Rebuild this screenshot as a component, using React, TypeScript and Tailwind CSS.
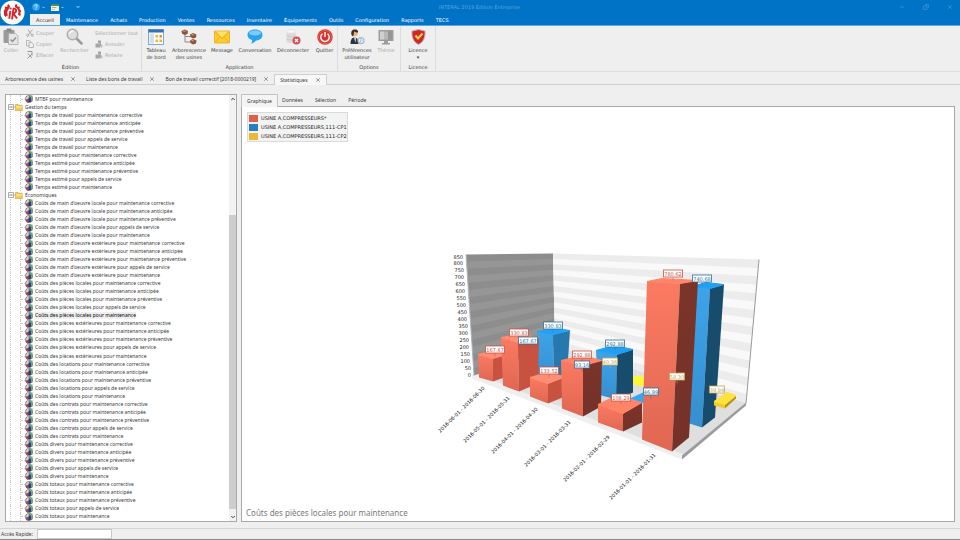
import { useState } from 'react';
import type { ReactNode } from 'react';
import { ChevronDown, ChevronUp, Copy, Minus, X } from 'lucide-react';
import clsx from 'clsx';

const menus = ['Maintenance', 'Achats', 'Production', 'Ventes', 'Ressources', 'Inventaire', 'Équipements', 'Outils', 'Configuration', 'Rapports', 'TECS'];

const documents = ['Arborescence des usines', 'Liste des bons de travail', 'Bon de travail correctif [2018-0000219]', 'Statistiques'];

const kinds = ['maintenance corrective', 'maintenance anticipée', 'maintenance préventive', 'appels de service', 'maintenance'];

const expand = (names: string[]) => names.flatMap((name) => kinds.map((kind) => `${name} pour ${kind}`));

type Row = { label: string; folder?: boolean };

const rows: Row[] = [
  { label: 'MTBF pour maintenance' },
  { label: 'Gestion du temps', folder: true },
  ...expand(['Temps de travail', 'Temps estimé']).map((label) => ({ label })),
  { label: 'Économiques', folder: true },
  ...expand([
    "Coûts de main d'oeuvre locale",
    "Coûts de main d'oeuvre extérieure",
    'Coûts des pièces locales',
    'Coûts des pièces extérieures',
    'Coûts des locations',
    'Coûts des contrats',
    'Coûts divers',
    'Coûts totaux',
  ]).map((label) => ({ label })),
];

/* ---------- icons ---------- */

const Logo = () => (
  <svg viewBox="0 0 24 24" className="absolute left-0 top-0 z-10 size-[25px]">
    <circle cx="12" cy="12" r="11.6" fill="#fff" />
    <g fill="none" stroke="#d8232a">
      <path d="M9.500 6.500A6 6 0 0 0 6.300 15.500" strokeWidth="3.200" />
      <path d="M7.600 4.400l1 2M4.700 7l2 1.100M3.700 10.800h2.200M4.300 14.600l2-.7" strokeWidth="1.800" />
      <path d="M14.500 6A6 6 0 0 1 18.200 14.500" strokeWidth="2" />
      <path d="M15.800 4l-.6 2M18.800 6.800l-1.600 1.100M20.200 10.600h-2M19.800 14.200l-2-.6" strokeWidth="1.700" />
      <path d="M10 10.500L9.100 17.800" stroke="#fff" strokeWidth="3.400" />
      <path d="M9.900 10.500L8.900 18" strokeWidth="1.800" />
      <path d="M13 7.800L11.600 18.600M12.400 8.400c4.200-.8 4 3.600 .2 4.400l3.800 5" strokeWidth="1.800" />
    </g>
    <circle cx="10.200" cy="8.200" r="1.200" fill="#d8232a" stroke="#fff" strokeWidth=".5" />
  </svg>
);

const HelpIcon = () => (
  <svg viewBox="0 0 16 16" className="size-2">
    <circle cx="8" cy="8" r="7.500" fill="#36a6ee" />
    <path d="M5.500 6.200c0-3.400 5.300-3.200 5.100-.3C10.500 7.800 8 7.800 8 9.600M8 11v1.800" fill="none" stroke="#fff" strokeWidth="1.700" />
  </svg>
);

const WindowIcon = () => (
  <svg viewBox="0 0 16 14" className="h-[7px] w-2">
    <path fill="#f4f1e4" d="M0 0h16v14H0z" />
    <path fill="#4d8f58" d="M0 0h16v4H0z" />
    <path fill="#b9a777" d="M2 6h9v2H2zM2 10h6v1H2z" />
  </svg>
);

const PasteIcon = () => (
  <svg viewBox="0 0 32 36" className="h-[18px] w-4">
    <rect x="1" y="4" width="22" height="26" rx="2" fill="#9b9b9b" />
    <rect x="7" y="1" width="10" height="6" rx="1" fill="#8a8a8a" />
    <path fill="#e6e6e6" stroke="#a5a5a5" strokeWidth="1.500" d="M11 11h14l5 5v17H11z" />
    <path d="M15 23l4 4 7-8" fill="none" stroke="#929292" strokeWidth="3" />
  </svg>
);

const CutIcon = () => (
  <svg viewBox="0 0 16 16" className="size-2" fill="none" stroke="#a6a6a6" strokeWidth="1.800">
    <path d="M4 1l7 10M13 1L5 11" />
    <circle cx="3.500" cy="12.500" r="2.200" />
    <circle cx="12.500" cy="12.500" r="2.200" />
  </svg>
);

const CopyIcon = () => (
  <svg viewBox="0 0 16 16" className="size-2" fill="#eee" stroke="#a6a6a6" strokeWidth="1.500">
    <path d="M1 1h6l3 3v8H1z" />
    <path d="M6 5h5l4 3v7H6z" />
  </svg>
);

const EraseIcon = () => (
  <svg viewBox="0 0 16 16" className="size-2" fill="none" stroke="#999" strokeWidth="2">
    <path d="M3 1h9v8M4 5l8 9M12 6l-9 9" />
  </svg>
);

const SearchIcon = () => (
  <svg viewBox="0 0 34 34" className="size-[17px]">
    <path d="M21 21l10 10" stroke="#9a9a9a" strokeWidth="5" strokeLinecap="round" />
    <circle cx="13" cy="13" r="10.500" fill="#dedede" stroke="#b0b0b0" strokeWidth="3" />
    <path d="M7 12a7 7 0 0 1 8-6" stroke="#fff" strokeWidth="2.500" fill="none" />
  </svg>
);

const UndoIcon = () => (
  <svg viewBox="0 0 16 16" className="size-2" fill="#a6a6a6">
    <path d="M1 7h10v8H1zM6 1h6v11H9V6H6z" />
    <path d="M12 9h3v6h-3z" fill="#c2c2c2" />
  </svg>
);

const BoardIcon = () => (
  <svg viewBox="0 0 32 32" className="size-4">
    <rect x="1" y="1" width="30" height="30" fill="#fff" stroke="#5d8fc4" strokeWidth="1.500" />
    <path fill="#3273b8" d="M1 1h30v6H1z" />
    <path fill="#cfe0f2" d="M3 9h9v20H3z" />
    <path fill="#f2b52a" d="M15 12h5v5h-5zM15 21h5v5h-5zM23 21h5v5h-5z" />
    <path fill="#f08d2a" d="M23 12h5v5h-5z" />
  </svg>
);

const TreeIcon = () => (
  <svg viewBox="0 0 32 32" className="size-4">
    <path d="M8 9v17h12M8 15h12" fill="none" stroke="#8a8a8a" strokeWidth="2" />
    <g fill="#8f5337">
      <path d="M1 4l6-3 7 3-1 6-6 2-5-3z" />
      <path d="M18 11l6-3 7 3-1 6-6 2-5-3z" />
      <path d="M18 23l6-3 7 3-1 6-6 2-5-3z" />
    </g>
    <path d="M4 4l5 1M21 11l5 1M21 23l5 1" stroke="#d9a27c" strokeWidth="2.500" />
  </svg>
);

const MailIcon = () => (
  <svg viewBox="0 0 32 28" className="h-[14px] w-4">
    <rect x="1" y="2" width="30" height="24" rx="1" fill="#ffcd2b" stroke="#e2a413" strokeWidth="1.500" />
    <path d="M2 25l10-11M30 25L20 14" stroke="#eaa91b" strokeWidth="1.500" />
    <path d="M2 3l14 14L30 3" fill="#ffe06b" stroke="#e09f12" strokeWidth="2" />
  </svg>
);

const ChatIcon = () => (
  <svg viewBox="0 0 32 30" className="h-[15px] w-4">
    <path d="M16 1c9 0 15 4.500 15 11s-6 11-13 11c-2 3-6 6-10 6 2-2 3-5 2-7-5-1.500-9-5-9-10C1 5.500 7 1 16 1z" fill="#27a3f2" />
    <ellipse cx="16" cy="8" rx="12" ry="5" fill="#7ccbfb" />
  </svg>
);

const DisconnectIcon = () => (
  <svg viewBox="0 0 32 32" className="size-4">
    <path d="M3 5v20c0 4 18 4 18 0V5z" fill="#dcdcdc" />
    <ellipse cx="12" cy="5" rx="9" ry="3.500" fill="#f8f8f8" stroke="#d4d4d4" />
    <path d="M3 12c0 4 18 4 18 0M3 19c0 4 18 4 18 0" fill="none" stroke="#c6c6c6" strokeWidth="1.500" />
    <circle cx="23" cy="23" r="8" fill="#d9505a" />
    <path d="M20 20l6 6M26 20l-6 6" stroke="#fff" strokeWidth="2.500" />
  </svg>
);

const PowerIcon = () => (
  <svg viewBox="0 0 32 32" className="size-4">
    <circle cx="16" cy="16" r="15.500" fill="#d8322f" />
    <circle cx="16" cy="16" r="13" fill="none" stroke="#ef7c76" strokeWidth="1.200" />
    <path d="M11 9.500a8.500 8.500 0 1 0 10 0M16 6v10" fill="none" stroke="#fff" strokeWidth="2.800" />
  </svg>
);

const UserIcon = () => (
  <svg viewBox="0 0 32 32" className="size-4">
    <path d="M3 30c0-9 3-13 8-13s8 4 8 13z" fill="#2b3442" />
    <path d="M10 17h4l-1 11z" fill="#e9eef3" />
    <circle cx="12" cy="9" r="5.500" fill="#eeb27a" />
    <path d="M5 12C3 3 8 0 13 1c4 0 6 3 5 6-4 0-6-1-8-2 0 4-1 8-2 10z" fill="#3c2c22" />
    <circle cx="24" cy="23" r="6" fill="#e4edf3" stroke="#a3bccd" strokeWidth="2.500" />
    <path d="M24 19v5l-3 3" stroke="#8ea4b5" strokeWidth="1.500" fill="none" />
  </svg>
);

const ThemeIcon = () => (
  <svg viewBox="0 0 32 32" className="size-4">
    <path fill="#9d9d9d" d="M1 2h30v22H1zM12 24h8v4h-8zM8 28h16v3H8z" />
    <path fill="#d0d0d0" d="M4 5h8v16H4z" />
    <path fill="#b9b9b9" d="M12 5h8v16h-8z" />
    <path fill="#959595" d="M20 5h8v16h-8z" />
  </svg>
);

const ShieldIcon = () => (
  <svg viewBox="0 0 30 32" className="h-4 w-[15px]">
    <path d="M15 1l13 3c1 13-3 22-13 27C5 26 1 17 2 4z" fill="#d3262c" stroke="#b9bcc2" strokeWidth="2" />
    <path d="M9 13l5 6 9-10" fill="none" stroke="#ffd640" strokeWidth="4" />
  </svg>
);

const FolderIcon = () => (
  <svg viewBox="0 0 16 14" className="h-[7px] w-2 shrink-0">
    <path d="M.5 2.500C.5 1 1 .7 2 .7h4l2 2h6.500v10.600H.5z" fill="#f3cb55" stroke="#bd952f" />
    <path d="M2 5h12v2H2z" fill="#fff0ad" />
  </svg>
);

const ReportIcon = () => (
  <svg viewBox="0 0 16 16" className="size-2 shrink-0">
    <circle cx="8" cy="8" r="7.500" fill="#5a5f63" />
    <path d="M8 1.500A6.500 6.500 0 0 0 1.500 9.500L7 8z" fill="#d2d2d2" />
    <path d="M9 1h6v12H12V5H9z" fill="#6ba576" />
    <path d="M2 9h5v6H4z" fill="#c23a3e" />
    <path d="M7.500 6h4v8h-4z" fill="#20369c" />
  </svg>
);

/* ---------- ribbon ---------- */

type ToolProps = { icon: ReactNode; label: string; second?: string; className: string; disabled?: boolean };

const Tool = ({ icon, label, second, className, disabled }: ToolProps) => (
  <button type="button" disabled={disabled} className={clsx('flex shrink-0 flex-col items-center whitespace-nowrap', disabled && 'text-[#a8a8a8]', className)}>
    <span className="flex h-[19px] items-center">{icon}</span>
    <span className="leading-[8px]">{label}</span>
    {second && <span className="leading-[6px]">{second}</span>}
  </button>
);

const SmallTool = ({ icon, label }: { icon?: ReactNode; label: string }) => (
  <button type="button" disabled className="flex h-[11px] items-center gap-0.5 whitespace-nowrap text-[#a8a8a8]">
    {icon}
    {label}
  </button>
);

const Group = ({ title, children }: { title: string; children: ReactNode }) => (
  <section aria-label={title} className="flex flex-col justify-between border-r border-[#dcdcdc]">
    <div className="flex pt-px">{children}</div>
    <div className="text-center leading-[8px]">{title}</div>
  </section>
);

const Ribbon = () => (
  <div className="flex h-[46px] border-b border-[#dedede] bg-[#efefef] font-['DejaVu_Sans',sans-serif]">
    <Group title="Édition">
      <Tool icon={<PasteIcon />} label="Coller" className="w-[26px] pr-1" disabled />
      <div className="w-[35px]">
        <SmallTool icon={<CutIcon />} label="Couper" />
        <SmallTool icon={<CopyIcon />} label="Copier" />
        <SmallTool icon={<EraseIcon />} label="Effacer" />
      </div>
      <Tool icon={<SearchIcon />} label="Rechercher" className="w-[27px]" disabled />
      <div className="ml-[7px] w-[46px]">
        <SmallTool label="Sélectionner tout" />
        <SmallTool icon={<UndoIcon />} label="Annuler" />
        <SmallTool icon={<UndoIcon />} label="Refaire" />
      </div>
    </Group>
    <Group title="Application">
      <Tool icon={<BoardIcon />} label="Tableau" second="de bord" className="w-7" />
      <Tool icon={<TreeIcon />} label="Arborescence" second="des usines" className="w-[38px]" />
      <Tool icon={<MailIcon />} label="Message" className="w-7" />
      <Tool icon={<ChatIcon />} label="Conversation" className="w-[38px]" />
      <Tool icon={<DisconnectIcon />} label="Déconnecter" className="w-[38px]" />
      <Tool icon={<PowerIcon />} label="Quitter" className="w-[25px]" />
    </Group>
    <Group title="Options">
      <Tool icon={<UserIcon />} label="Préférences" second="utilisateur" className="w-[38px]" />
      <Tool icon={<ThemeIcon />} label="Thème" className="w-6 pr-1" disabled />
    </Group>
    <Group title="Licence">
      <Tool icon={<ShieldIcon />} label="Licence" second="▾" className="w-[34px]" />
    </Group>
  </div>
);

const Header = () => (
  <header className="relative flex h-[26px] flex-col justify-between border-b border-[#5aa7e3] bg-[#0173c7] text-white">
    <Logo />
    <div className="flex h-[14px] items-center pl-8">
      <button type="button" aria-label="Aide" className="flex items-center gap-0.5">
        <HelpIcon />
        <ChevronDown className="size-[3px]" strokeWidth={5} />
      </button>
      <button type="button" aria-label="Fenêtre" className="ml-1.5 flex items-center gap-0.5">
        <WindowIcon />
        <ChevronDown className="size-[3px]" strokeWidth={5} />
      </button>
      <button type="button" aria-label="Personnaliser" className="ml-3">
        <ChevronDown className="size-1" strokeWidth={5} />
      </button>
      <h1 className="flex-1 pr-5 text-center text-[5px] text-[#5aa4dc] font-['DejaVu_Sans',sans-serif]">INTERAL 2019 Édition Entreprise</h1>
      <div className="flex items-center gap-[18px] pr-[7px] text-[#5aa4dc]">
        <button type="button" aria-label="Réduire"><Minus className="size-1.5" /></button>
        <button type="button" aria-label="Restaurer"><Copy className="size-1.5 -scale-x-100" /></button>
        <button type="button" aria-label="Fermer"><X className="size-1.5" /></button>
      </div>
    </div>
    <nav className="flex h-[11px] items-center pl-[30px] font-['DejaVu_Sans',sans-serif]">
      <button type="button" className="h-full w-[30px] bg-[#efefef] text-[#333]">Accueil</button>
      <div className="flex gap-3 pl-1.5">
        {menus.map((menu) => (
          <button key={menu} type="button">{menu}</button>
        ))}
      </div>
    </nav>
  </header>
);

const DocumentTabs = () => (
  <div className="flex h-[13px] items-end border-b border-[#cfcfcf]">
    {documents.map((name) => {
      const active = name === 'Statistiques';
      return (
        <div key={name} className={clsx('flex h-[11px] items-center gap-[7px] px-[5px]', active && '-mb-px h-3 border border-b-0 border-[#cfcfcf] bg-[#f7f7f7]')}>
          <button type="button">{name}</button>
          <button type="button" aria-label={`Fermer ${name}`}><X className="size-1.5" strokeWidth={2} /></button>
        </div>
      );
    })}
  </div>
);

/* ---------- tree ---------- */

const Tree = () => {
  const [selected, setSelected] = useState('Coûts des pièces locales pour maintenance');

  return (
    <aside className="flex w-[232px] shrink-0 border border-[#a9a9a9] bg-white">
      <ul className="flex min-w-0 flex-1 flex-col overflow-hidden pl-0.5">
        {rows.map((row) => (
          <li key={row.label} className="flex min-h-0 flex-1 items-stretch">
            {row.folder ? (
              <button type="button" className="flex items-center">
                <svg viewBox="0 0 7 8" className="h-2 w-[7px]" fill="none">
                  <path d="M.5 4H7" stroke="#bbb" />
                  <path d="M.5 1.500h5v5h-5z" stroke="#aaa" fill="#fff" />
                  <path d="M1.500 4h3" stroke="#777" />
                </svg>
                <FolderIcon />
                <span className="pl-0.5">{row.label}</span>
              </button>
            ) : (
              <>
                <span className="ml-0.5 w-2.5 border-l border-dotted border-[#ccc]" />
                <span className="flex w-[5px] items-center border-l border-dotted border-[#ccc]">
                  <span className="w-full border-t border-dotted border-[#ccc]" />
                </span>
                <button type="button" onClick={() => setSelected(row.label)} className="flex items-center gap-0.5 whitespace-nowrap">
                  <ReportIcon />
                  <span className={clsx('leading-[7px]', selected === row.label && 'bg-[#efefef] text-black')}>{row.label}</span>
                </button>
              </>
            )}
          </li>
        ))}
      </ul>
      <div className="flex w-[7px] flex-col items-center bg-[#f2f2f2]">
        <ChevronUp className="my-px size-1.5 shrink-0" strokeWidth={4} />
        <div className="flex w-full flex-1 flex-col">
          <div className="flex-[112]" />
          <div className="flex-[293] bg-[#cdcdcd]" />
          <div className="flex-[4]" />
        </div>
        <ChevronDown className="my-px size-1.5 shrink-0" strokeWidth={4} />
      </div>
    </aside>
  );
};

/* ---------- chart ---------- */

const legend = [
  { label: 'USINE A,COMPRESSEURS*', swatch: 'bg-[#dd614c]' },
  { label: 'USINE A,COMPRESSEURS,111-CP1', swatch: 'bg-[#2580bd]' },
  { label: 'USINE A,COMPRESSEURS,111-CP2', swatch: 'bg-[#edb935]' },
];

type Pt = [number, number];
const pts = (list: Pt[]) => list.map((p) => p.join(',')).join(' ');
const mix = (a: Pt, b: Pt, t: number): Pt => [a[0] + (b[0] - a[0]) * t, a[1] + (b[1] - a[1]) * t];

const STEPS = 17;

// every second band of a wall, drawn over the wall's own fill
const bands = (topLeft: Pt, bottomLeft: Pt, topRight: Pt, bottomRight: Pt) =>
  Array.from({ length: 8 }, (_, n) => {
    const from = (n * 2 + 1) / STEPS;
    const to = (n * 2 + 2) / STEPS;
    return pts([mix(topLeft, bottomLeft, from), mix(topRight, bottomRight, from), mix(topRight, bottomRight, to), mix(topLeft, bottomLeft, to)]);
  });

const sideWall = bands([466, 254], [474, 375], [553, 253], [555, 345]);
const backWall = bands([553, 253], [555, 345], [759, 259], [746, 402]);

// top: left, back, right, front; bottom: left, front, right
type Bar = { top: [Pt, Pt, Pt, Pt]; bottom: [Pt, Pt, Pt]; tone: 'red' | 'redDark' | 'blue' | 'blueDark' | 'yellow' };

const tones = {
  red: { left: 'url(#red)', right: '#c6523f', top: '#ff8f74' },
  redDark: { left: 'url(#red)', right: 'url(#redShade)', top: '#ff8468' },
  blue: { left: 'url(#blue)', right: '#2778ae', top: '#20a3f8' },
  blueDark: { left: 'url(#blue)', right: '#174c6d', top: '#20a0f2' },
  yellow: { left: '#f2cb24', right: '#b9921a', top: '#ffe23c' },
};

const bars: Bar[] = [
  { tone: 'red', top: [[478, 354], [490, 351], [507, 354], [493, 358]], bottom: [[479, 377], [493, 381], [507, 376]] },
  { tone: 'blue', top: [[537, 331], [556, 328], [570, 330], [553, 334]], bottom: [[538, 377], [554, 381], [567, 374]] },
  { tone: 'red', top: [[501, 337], [520, 334], [539, 337], [518, 342]], bottom: [[503, 385], [519, 391], [538, 383]] },
  { tone: 'red', top: [[530, 377], [547, 372], [566, 376], [548, 383]], bottom: [[530, 396], [548, 403], [565, 396]] },
  { tone: 'blueDark', top: [[596, 350], [614, 345], [633, 349], [617, 354]], bottom: [[598, 394], [616, 399], [633, 392]] },
  { tone: 'redDark', top: [[561, 360], [582, 355], [602, 360], [583, 365]], bottom: [[562, 408], [583, 416], [601, 406]] },
  { tone: 'blueDark', top: [[692, 286], [706, 282], [724, 284], [710, 288]], bottom: [[680, 420], [702, 427], [715, 417]] },
  { tone: 'redDark', top: [[598, 404], [617, 395], [642, 402], [623, 413]], bottom: [[598, 422], [623, 431], [642, 422]] },
  { tone: 'redDark', top: [[647, 281], [662, 278], [698, 280], [680, 283]], bottom: [[642, 439], [672, 451], [689, 437]] },
  { tone: 'yellow', top: [[714, 401], [727, 392], [736, 395], [725, 404]], bottom: [[714, 405], [725, 408], [736, 398]] },
];

const values: { x: number; y: number; text: string; color: string }[] = [
  { x: 495, y: 349, text: '167.67', color: '#c8503f' },
  { x: 519, y: 332, text: '330.83', color: '#c8503f' },
  { x: 528, y: 340, text: '167.67', color: '#2c7099' },
  { x: 553, y: 325, text: '330.83', color: '#2c7099' },
  { x: 582, y: 354, text: '292.88', color: '#c8503f' },
  { x: 582, y: 364, text: '93.16', color: '#2c7099' },
  { x: 549, y: 370, text: '133.52', color: '#c8503f' },
  { x: 615, y: 343, text: '292.88', color: '#2c7099' },
  { x: 610, y: 361, text: '40.36', color: '#c5a452' },
  { x: 673, y: 273, text: '780.62', color: '#c8503f' },
  { x: 702, y: 278, text: '740.68', color: '#2c7099' },
  { x: 677, y: 376, text: '58.30', color: '#c5a452' },
  { x: 651, y: 391, text: '46.99', color: '#2c7099' },
  { x: 621, y: 397, text: '108.29', color: '#c8503f' },
  { x: 717, y: 389, text: '39.94', color: '#c5a452' },
];

const periods = [
  { x: 484, y: 387, text: '2016-06-01 - 2016-06-30' },
  { x: 509, y: 397, text: '2016-05-01 - 2016-05-31' },
  { x: 537, y: 408, text: '2016-04-01 - 2016-04-30' },
  { x: 570, y: 421, text: '2016-03-01 - 2016-03-31' },
  { x: 609, y: 436, text: '2016-02-01 - 2016-02-29' },
  { x: 655, y: 454, text: '2016-01-01 - 2016-01-31' },
];

const Chart = () => (
  <svg viewBox="242 142 712 364" className="min-h-0 w-full flex-1 font-['DejaVu_Sans',sans-serif]" role="img" aria-label="Coûts des pièces locales pour maintenance">
    <defs>
      <linearGradient id="red" x2="0" y2="1">
        <stop offset="0" stopColor="#fb7a62" />
        <stop offset="1" stopColor="#e06753" />
      </linearGradient>
      <linearGradient id="redShade" x2="0" y2="1">
        <stop offset="0" stopColor="#7b3429" />
        <stop offset="1" stopColor="#74322a" />
      </linearGradient>
      <linearGradient id="blue" x2="0" y2="1">
        <stop offset="0" stopColor="#3ca4ea" />
        <stop offset="1" stopColor="#368fcf" />
      </linearGradient>
    </defs>

    <polygon points="474,375 555,345 746,402 682,456" fill="#dfdfdf" />
    <polygon points="472,374 475,373 684,454 682,459 472,378" fill="#efefef" />
    <polygon points="746,402 746,405 682,459 682,455" fill="#9b9b9b" />
    <polygon points="466,254 553,253 555,345 474,375" fill="#8d8d8d" />
    {sideWall.map((points) => (
      <polygon key={points} points={points} fill="#969696" />
    ))}
    <polygon points="553,253 759,259 746,402 555,345" fill="#ececec" />
    {backWall.map((points) => (
      <polygon key={points} points={points} fill="#f9f9f9" />
    ))}
    <path d="M466 254L474 375" stroke="#b5b5b5" />
    <path d="M759 259L746 403" stroke="#9a9a9a" />
    <polygon points="632,376 640,375 648,378 644,386 633,384" fill="#fdf63a" />
    <polygon points="630,398 643,392 655,396 642,403" fill="#2ea9f4" />

    {bars.map(({ top: [left, back, right, front], bottom: [bl, bf, br], tone }) => (
      <g key={pts([left, bf])}>
        <polygon points={pts([left, front, bf, bl])} fill={tones[tone].left} />
        <polygon points={pts([front, right, br, bf])} fill={tones[tone].right} />
        <polygon points={pts([left, back, right, front])} fill={tones[tone].top} stroke={tones[tone].top} strokeWidth="1" strokeLinejoin="round" />
      </g>
    ))}

    {values.map(({ x, y, text, color }) => {
      const half = text.length > 5 ? 10 : 8;
      return (
        <g key={`${x}-${y}`}>
          <path d={`M${x} ${y + 4}v3`} stroke={color} strokeWidth="0.500" />
          <rect x={x - half + 0.5} y={y - 3.5} width={half * 2 - 1} height="7" fill="#fff" stroke={color} strokeOpacity="0.800" />
          <text x={x} y={y + 2} textAnchor="middle" fill={color} className="text-[5px]">{text}</text>
        </g>
      );
    })}

    {Array.from({ length: STEPS + 1 }, (_, i) => (
      <text key={i} x={463 + Math.round((8 * i) / STEPS)} y={258 + (118 * i) / STEPS} textAnchor="end" fill="#222" className="text-[5px]">
        {850 - i * 50}
      </text>
    ))}

    {periods.map(({ x, y, text }) => (
      <text key={text} textAnchor="end" dominantBaseline="middle" transform={`translate(${x} ${y}) rotate(-45)`} fill="#111" className="text-[5px]">
        {text}
      </text>
    ))}
  </svg>
);

const ChartPanel = () => (
  <main className="flex min-w-0 flex-1 flex-col">
    <div className="flex h-3 items-stretch">
      <button type="button" className="z-10 -mb-px w-[37px] border border-b-0 border-[#c4c4c4] bg-[#f4f4f4]">Graphique</button>
      <div className="flex items-center gap-3 pl-1">
        <button type="button">Données</button>
        <button type="button">Sélection</button>
        <button type="button">Période</button>
      </div>
    </div>
    <div className="flex min-h-0 flex-1 flex-col border border-[#a9a9a9] bg-white">
      <ul className="ml-[5px] mt-[5px] flex flex-col gap-px self-start border border-[#dadada] bg-[#f3f3f3] py-px pl-px font-['DejaVu_Sans',sans-serif]">
        {legend.map(({ label, swatch }) => (
          <li key={label} className="flex h-2 items-center gap-[3px] text-[#222]">
            <span className={clsx('h-[7px] w-[9px]', swatch)} />
            {label}
          </li>
        ))}
      </ul>
      <Chart />
      <h2 className="pb-0.5 pl-1 text-[8px] leading-[12px] text-[#7a7a7a]">Coûts des pièces locales pour maintenance</h2>
    </div>
  </main>
);

export default function App() {
  return (
    <div className="flex h-screen flex-col bg-[#efefef] font-['Noto_Sans',sans-serif] text-[5px] leading-[8px] text-[#3c3c3c]">
      <Header />
      <Ribbon />
      <DocumentTabs />
      <div className="flex min-h-0 flex-1 gap-1 px-[5px] pb-1.5 pt-[9px]">
        <Tree />
        <ChartPanel />
      </div>
      <footer className="flex h-3 items-center gap-1 border-b border-t border-b-[#8c8c8c] border-t-[#d4d4d4] pl-px">
        <label htmlFor="quick">Accès Rapide:</label>
        <input id="quick" type="text" className="h-full w-[75px] border border-[#c9c9c9] bg-white px-0.5 outline-none" />
      </footer>
    </div>
  );
}
